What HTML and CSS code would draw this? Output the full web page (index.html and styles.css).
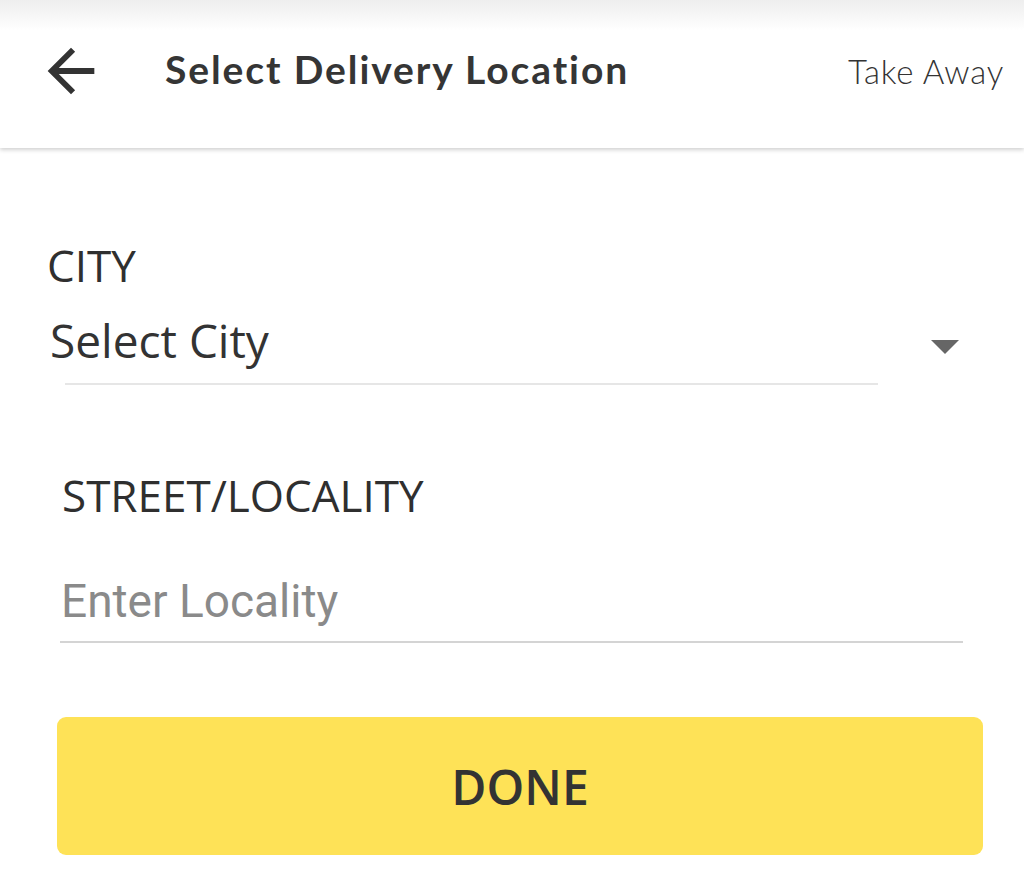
FILE: index.html
```html
<!DOCTYPE html>
<html>
<head>
<meta charset="utf-8">
<link rel="stylesheet" href="styles.css">
</head>
<body>
<header class="appbar">
  <svg class="back" viewBox="0 0 24 24" aria-hidden="true"><path d="M20 11H7.83l5.59-5.59L12 4l-8 8 8 8 1.41-1.41L7.83 13H20v-2z"/></svg>
  <h1 class="title">Select Delivery Location</h1>
  <span class="takeaway">Take Away</span>
</header>
<main class="content">
  <div class="label city-label">CITY</div>
  <div class="select-row">
    <span class="select-value">Select City</span>
    <span class="caret"></span>
  </div>
  <div class="select-line"></div>
  <div class="label street-label">STREET/LOCALITY</div>
  <div class="input">Enter Locality</div>
  <div class="input-line"></div>
  <button class="done">DONE</button>
</main>
</body>
</html>
```
FILE: styles.css
```css
html, body {
  margin: 0;
  padding: 0;
  background: #fff;
}
body {
  width: 1024px;
  height: 877px;
  overflow: hidden;
  font-family: "Open Sans", "Noto Sans", sans-serif;
  color: #333;
}
.appbar {
  height: 148px;
  display: flex;
  align-items: center;
  background: linear-gradient(to bottom, #eeeeee 0px, #fafafa 22px, #ffffff 30px, #ffffff 100%);
  box-shadow: 0 2px 4px rgba(0, 0, 0, 0.18);
  position: relative;
  z-index: 1;
}
.back {
  width: 70px;
  height: 70px;
  fill: #333;
  margin-left: 36px;
  margin-top: -6px;
  flex: none;
}
.title {
  margin: -10px 0 0 59px;
  font-family: "Lato", sans-serif;
  font-weight: 700;
  font-size: 39px;
  letter-spacing: 1.9px;
  color: #353535;
  flex: 1;
}
.takeaway {
  font-family: "Lato", sans-serif;
  font-weight: 300;
  font-size: 33px;
  letter-spacing: 0.8px;
  color: #333;
  margin-right: 20px;
  margin-top: -6px;
}
.content {
  padding: 87px 0 0 0;
}
.label {
  font-size: 44px;
  line-height: 60px;
  color: #2f2f2f;
}
.city-label {
  margin-left: 47px;
}
.select-row {
  display: flex;
  align-items: center;
  margin-top: 15px;
  height: 60px;
  padding-left: 50px;
}
.select-value {
  font-size: 46px;
  line-height: 60px;
  color: #333;
  flex: 1;
}
.caret {
  width: 0;
  height: 0;
  border-left: 14px solid transparent;
  border-right: 14px solid transparent;
  border-top: 14px solid #666;
  margin-right: 65px;
  margin-top: 14px;
}
.select-line {
  margin: 13px 0 0 65px;
  width: 813px;
  height: 2px;
  background: #e6e6e6;
}
.street-label {
  margin: 80px 0 0 62px;
}
.input {
  margin: 46px 0 0 61px;
  font-family: "Roboto", sans-serif;
  font-size: 46px;
  line-height: 60px;
  color: #8a8a8a;
}
.input-line {
  margin: 10px 0 0 60px;
  width: 903px;
  height: 2px;
  background: #d4d4d4;
}
.done {
  display: block;
  margin: 74px 0 0 57px;
  width: 926px;
  height: 138px;
  border: none;
  border-radius: 9px;
  background: #fee257;
  font-family: "Open Sans", sans-serif;
  font-weight: 600;
  font-size: 48px;
  color: #333;
  padding: 0;
}
```
